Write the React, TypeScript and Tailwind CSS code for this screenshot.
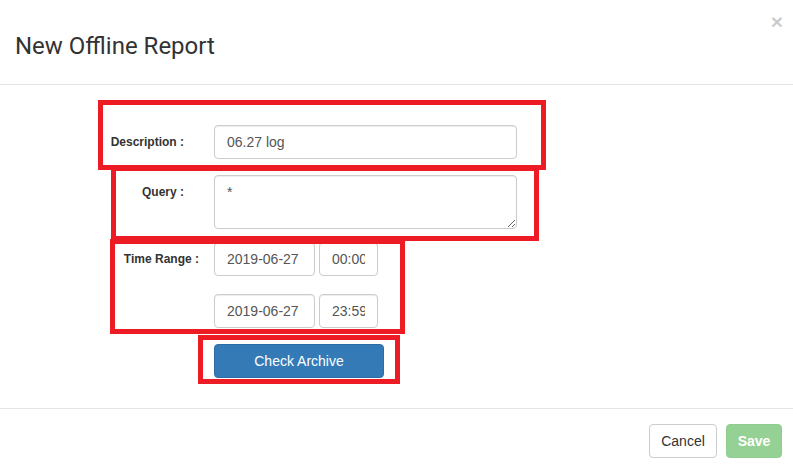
import React from 'react';

const input =
  'h-[34px] rounded-[4px] border border-[#ccc] bg-white px-[12px] text-[14px] text-[#555] outline-none shadow-[inset_0_1px_1px_rgba(0,0,0,0.075)]';

export default function App() {
  return (
    <div className="relative h-[471px] w-[793px] overflow-hidden bg-white text-[#333] font-['Liberation_Sans',Arial,sans-serif]">
      <header className="relative h-[85px] border-b border-[#e5e5e5] px-[15px] pt-[33px]">
        <h1 className="font-['Roboto',sans-serif] text-[24px] leading-[26px] text-[#333]">New Offline Report</h1>
        <button className="absolute right-[10px] top-[11px] text-[21px] font-bold leading-none text-black opacity-20">×</button>
      </header>

      <main className="h-[323px] pt-[40px]">
        <div className="flex items-center">
          <label className="w-[199px] pr-[15px] text-right text-[12px] font-bold">Description :</label>
          <input readOnly value="06.27 log" className={`${input} ml-[15px] w-[303px]`} />
        </div>

        <div className="mt-[16px] flex items-start">
          <label className="w-[199px] pr-[15px] pt-[8px] text-right text-[12px] font-bold">Query :</label>
          <textarea readOnly value="*" className={`${input} ml-[15px] h-[54px] w-[303px] py-[6px] leading-[20px]`} />
        </div>

        <div className="mt-[13px] flex items-start">
          <label className="w-[199px] pt-[8px] text-right text-[12px] font-bold">Time Range :</label>
          <div className="ml-[15px] flex flex-col gap-[18px]">
            <div className="flex gap-[4px]">
              <input readOnly value="2019-06-27" className={`${input} w-[101px]`} />
              <input readOnly value="00:00" className={`${input} w-[59px]`} />
            </div>
            <div className="flex gap-[4px]">
              <input readOnly value="2019-06-27" className={`${input} w-[101px]`} />
              <input readOnly value="23:59" className={`${input} w-[59px]`} />
            </div>
          </div>
        </div>

        <div className="mt-[16px] pl-[214px]">
          <button className="h-[34px] w-[170px] rounded-[4px] border border-[#2e6da4] bg-[#337ab7] text-[14px] text-white">
            Check Archive
          </button>
        </div>
      </main>

      <footer className="flex h-[63px] items-start justify-end gap-[9px] border-t border-[#e5e5e5] pr-[11px] pt-[15px]">
        <button className="h-[34px] w-[68px] rounded-[4px] border border-[#ccc] bg-white text-[14px] text-[#333]">Cancel</button>
        <button className="h-[34px] w-[56px] rounded-[4px] border border-[#8fce8f] bg-[#95d195] text-[14px] font-bold text-white">Save</button>
      </footer>

      {/* red annotation boxes */}
      <div className="pointer-events-none absolute left-[98px] top-[100px] h-[70px] w-[448px] border-[5px] border-[#ed1c24]" />
      <div className="pointer-events-none absolute left-[111px] top-[166px] h-[75px] w-[428px] border-[5px] border-[#ed1c24]" />
      <div className="pointer-events-none absolute left-[110px] top-[239px] h-[95px] w-[295px] border-[5px] border-[#ed1c24]" />
      <div className="pointer-events-none absolute left-[198px] top-[335px] h-[49px] w-[202px] border-[5px] border-[#ed1c24]" />
    </div>
  );
}
